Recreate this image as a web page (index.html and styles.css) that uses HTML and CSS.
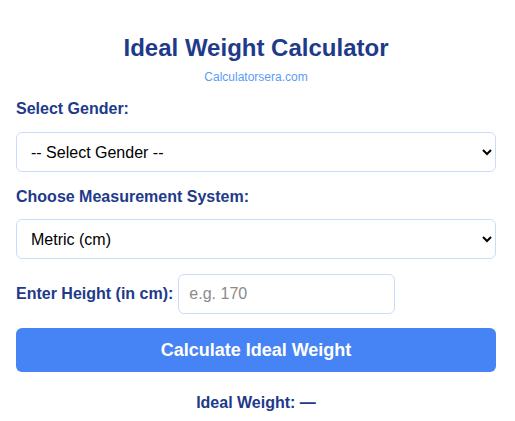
FILE: index.html
```html
<!DOCTYPE html>
<html lang="en">
<head>
<meta charset="utf-8">
<title>Ideal Weight Calculator</title>
<link rel="stylesheet" href="styles.css">
</head>
<body>
<div class="calc">
  <h1 class="title">Ideal Weight Calculator</h1>
  <div class="site">Calculatorsera.com</div>
  <label class="label" for="gender">Select Gender:</label>
  <select id="gender" class="field">
    <option>-- Select Gender --</option>
    <option>Male</option>
    <option>Female</option>
  </select>
  <label class="label" for="system">Choose Measurement System:</label>
  <select id="system" class="field">
    <option>Metric (cm)</option>
    <option>Imperial (in)</option>
  </select>
  <div class="height-row">
    <label class="label inline" for="height">Enter Height (in cm):</label>
    <input id="height" class="input" type="number" placeholder="e.g. 170">
  </div>
  <button class="btn" type="button">Calculate Ideal Weight</button>
  <div class="result">Ideal Weight: —</div>
</div>
</body>
</html>
```
FILE: styles.css
```css
html, body {
  margin: 0;
  padding: 0;
  background: #ffffff;
}
body {
  font-family: "Liberation Sans", Arial, sans-serif;
  padding: 16px;
}
.calc {
  width: 480px;
  display: flex;
  flex-direction: column;
}
.title {
  margin: 18px 0 0;
  text-align: center;
  font-size: 24px;
  font-weight: bold;
  color: #1e3a8a;
  line-height: 28px;
}
.site {
  text-align: center;
  font-size: 12px;
  color: #5b9cf6;
  margin-top: 8px;
  line-height: 14px;
}
.label {
  font-size: 16px;
  font-weight: bold;
  color: #1e3a8a;
  margin-top: 16px;
  line-height: 18px;
}
.field {
  margin-top: 14px;
  height: 40px;
  font-size: 16px;
  font-family: "Liberation Sans", Arial, sans-serif;
  color: #000;
  background: #fff;
  border: 1px solid #c9ddfb;
  border-radius: 6px;
  padding: 0 10px;
}
.field + .label + .field {
  margin-top: 13px;
}
.height-row {
  margin-top: 15px;
  display: flex;
  align-items: center;
  gap: 5px;
}
.label.inline {
  margin-top: 0;
}
.input {
  width: 217px;
  height: 40px;
  box-sizing: border-box;
  font-size: 16px;
  font-family: "Liberation Sans", Arial, sans-serif;
  border: 1px solid #c9ddfb;
  border-radius: 6px;
  padding: 0 10px;
}
.input::placeholder {
  color: #8a8a8a;
}
.btn {
  margin-top: 14px;
  height: 44px;
  background: #4683f5;
  color: #fff;
  border: none;
  border-radius: 6px;
  font-size: 18px;
  font-weight: bold;
  font-family: "Liberation Sans", Arial, sans-serif;
}
.result {
  margin-top: 22px;
  text-align: center;
  font-size: 16px;
  font-weight: bold;
  color: #1e3a8a;
}
```
